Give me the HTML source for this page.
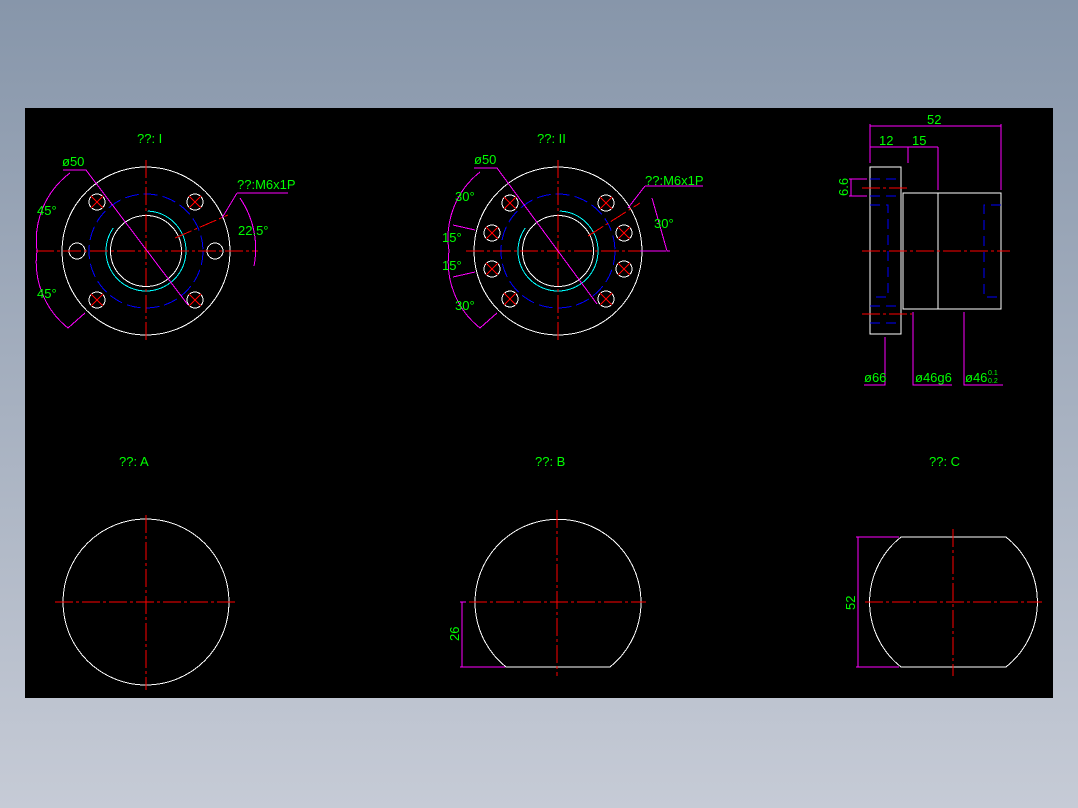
<!DOCTYPE html>
<html><head><meta charset="utf-8"><style>
html,body{margin:0;padding:0;width:1078px;height:808px;overflow:hidden;background:linear-gradient(#8796aa,#c6cbd6);}
svg{position:absolute;left:0;top:0}
text{font-family:"Liberation Sans Narrow","Liberation Sans",sans-serif;fill:#00ff00;font-size:13px}
</style></head><body>
<svg width="1078" height="808" viewBox="0 0 1078 808">
<rect x="25" y="108" width="1028" height="590" fill="#000"/>
<g fill="none" stroke-width="1" shape-rendering="crispEdges">
<!-- View I -->
<g stroke="#fff">
<circle cx="146" cy="251" r="84"/>
<circle cx="146" cy="251" r="35.5"/>
<circle cx="77" cy="251" r="8"/><circle cx="215" cy="251" r="8"/>
<circle cx="97" cy="202" r="8"/><circle cx="195" cy="202" r="8"/>
<circle cx="97" cy="300" r="8"/><circle cx="195" cy="300" r="8"/>
</g>
<circle cx="146" cy="251" r="40" stroke="#00ffff" stroke-dasharray="150 40"/>
<circle cx="146" cy="251" r="57" stroke="#0000ff" stroke-dasharray="14 5"/>
<g stroke="#ff0000" stroke-dasharray="18 3 3 3">
<line x1="146" y1="160" x2="146" y2="342"/><line x1="36" y1="251" x2="258" y2="251"/>
<line x1="175" y1="238" x2="228" y2="215"/>
</g>
<g stroke="#ff0000"><path d="M91 196l12 12M103 196l-12 12M189 196l12 12M201 196l-12 12M91 294l12 12M103 294l-12 12M189 294l12 12M201 294l-12 12"/></g>
<g stroke="#ff00ff">
<path d="M63 170H86L188 305"/><path d="M70 173A84 84 0 0 0 37 251A84 84 0 0 0 68 328"/>
<path d="M68 328L85 313"/><path d="M237 193H288"/><path d="M237 193L222 218"/>
<path d="M240 198A90 90 0 0 1 254 266"/>
</g>
<!-- View II -->
<g stroke="#fff">
<circle cx="558" cy="251" r="84"/><circle cx="558" cy="251" r="35.5"/>
<circle cx="492" cy="233" r="8"/><circle cx="624" cy="233" r="8"/>
<circle cx="492" cy="269" r="8"/><circle cx="624" cy="269" r="8"/>
<circle cx="510" cy="203" r="8"/><circle cx="606" cy="203" r="8"/>
<circle cx="510" cy="299" r="8"/><circle cx="606" cy="299" r="8"/>
</g>
<circle cx="558" cy="251" r="40" stroke="#00ffff" stroke-dasharray="150 40"/>
<circle cx="558" cy="251" r="57" stroke="#0000ff" stroke-dasharray="14 5"/>
<g stroke="#ff0000" stroke-dasharray="18 3 3 3">
<line x1="558" y1="160" x2="558" y2="342"/><line x1="466" y1="251" x2="666" y2="251"/>
<line x1="588" y1="236" x2="640" y2="203"/>
</g>
<g stroke="#ff0000"><path d="M504 197l12 12M516 197l-12 12M600 197l12 12M612 197l-12 12M504 293l12 12M516 293l-12 12M600 293l12 12M612 293l-12 12M486 227l12 12M498 227l-12 12M618 227l12 12M630 227l-12 12M486 263l12 12M498 263l-12 12M618 263l12 12M630 263l-12 12"/></g>
<g stroke="#ff00ff">
<path d="M474 168H497L597 304"/><path d="M480 172A84 84 0 0 0 449 251A84 84 0 0 0 480 328"/>
<path d="M480 328L497 313M453 225L475 230M453 277L475 272"/>
<path d="M645 186H703M645 186L628 208"/><path d="M652 198L667 251H670M666 251H640"/>
</g>
<!-- Side view -->
<g stroke="#fff">
<rect x="870" y="167" width="31" height="167"/>
<rect x="903" y="193" width="98" height="116"/>
<line x1="938" y1="193" x2="938" y2="309"/>
</g>
<g stroke="#0000ff" stroke-dasharray="10 6">
<path d="M870 179H901M870 196H901M870 306H901M870 323H901"/>
<path d="M870 205H888V297H870"/><path d="M1001 205H984V297H1001"/>
</g>
<g stroke="#ff0000" stroke-dasharray="18 3 3 3">
<line x1="862" y1="251" x2="1010" y2="251"/><line x1="862" y1="188" x2="908" y2="188"/><line x1="862" y1="314" x2="912" y2="314"/>
</g>
<g stroke="#ff00ff">
<path d="M870 126H1001M870 124V163M1001 124V190M870 147H938M908 147V163M938 147V190"/>
<path d="M849 179H867M849 196H867M851 179V196"/>
<path d="M885 337V385H864M913 312V385H952M964 312V385H1003"/>
</g>
<!-- Bottom views -->
<circle cx="146" cy="602" r="83" stroke="#fff"/>
<path d="M506 667A83 83 0 1 1 610 667Z" stroke="#fff"/>
<path d="M901 537H1006A83 83 0 0 1 1006 667H901A83 83 0 0 1 901 537Z" stroke="#fff"/>
<g stroke="#ff0000" stroke-dasharray="18 3 3 3">
<line x1="146" y1="515" x2="146" y2="690"/><line x1="55" y1="602" x2="238" y2="602"/>
<line x1="557" y1="510" x2="557" y2="676"/><line x1="469" y1="602" x2="646" y2="602"/>
<line x1="953" y1="529" x2="953" y2="676"/><line x1="865" y1="602" x2="1042" y2="602"/>
</g>
<g stroke="#ff00ff">
<path d="M460 602H466M462 602V667M460 667H505"/>
<path d="M856 537H899M858 537V667M856 667H899"/>
</g>
</g>
<text x="137" y="143">??: I</text>
<text x="537" y="143">??: II</text>
<text x="62" y="166">ø50</text>
<text x="474" y="164">ø50</text>
<text x="237" y="189">??:M6x1P</text>
<text x="645" y="185">??:M6x1P</text>
<text x="37" y="215">45°</text><text x="37" y="298">45°</text>
<text x="238" y="235">22.5°</text>
<text x="455" y="201">30°</text><text x="442" y="242">15°</text><text x="442" y="270">15°</text><text x="455" y="310">30°</text>
<text x="654" y="228">30°</text>
<text x="927" y="124">52</text><text x="879" y="145">12</text><text x="912" y="145">15</text>
<text x="0" y="0" transform="translate(848 196) rotate(-90)">6.6</text>
<text x="864" y="382">ø66</text><text x="915" y="382">ø46g6</text><text x="965" y="382">ø46</text>
<text x="988" y="375" style="font-size:7px">0.1</text><text x="988" y="383" style="font-size:7px">0.2</text>
<text x="119" y="466">??: A</text><text x="535" y="466">??: B</text><text x="929" y="466">??: C</text>
<text x="0" y="0" transform="translate(459 641) rotate(-90)">26</text>
<text x="0" y="0" transform="translate(855 610) rotate(-90)">52</text>
</svg>
</body></html>
